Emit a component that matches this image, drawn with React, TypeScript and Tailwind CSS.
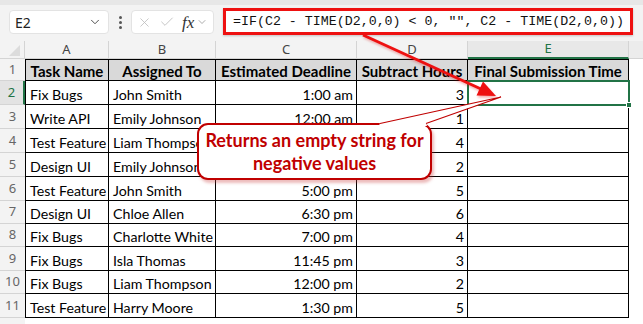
import { ChevronDown, X, Check } from "lucide-react";

interface Task {
  name: string;
  assignee: string;
  deadline: string;
  hours: number;
}

// deadlines of rows 4 and 5 sit under the callout in the picture
const tasks: Task[] = [
  { name: "Fix Bugs", assignee: "John Smith", deadline: "1:00 am", hours: 3 },
  { name: "Write API", assignee: "Emily Johnson", deadline: "12:00 am", hours: 1 },
  { name: "Test Feature", assignee: "Liam Thompson", deadline: "", hours: 4 },
  { name: "Design UI", assignee: "Emily Johnson", deadline: "", hours: 2 },
  { name: "Test Feature", assignee: "John Smith", deadline: "5:00 pm", hours: 5 },
  { name: "Design UI", assignee: "Chloe Allen", deadline: "6:30 pm", hours: 6 },
  { name: "Fix Bugs", assignee: "Charlotte White", deadline: "7:00 pm", hours: 4 },
  { name: "Fix Bugs", assignee: "Isla Thomas", deadline: "11:45 pm", hours: 3 },
  { name: "Fix Bugs", assignee: "Liam Thompson", deadline: "12:00 pm", hours: 2 },
  { name: "Test Feature", assignee: "Harry Moore", deadline: "1:30 pm", hours: 5 },
];

// rows 2..11 are not all the same height in the sheet
const rowHeights = ["h-[24px]", "h-[24px]", "h-[24px]", "h-[24px]", "h-[24px]", "h-[23px]", "h-[23px]", "h-[24px]", "h-[23px]", "h-[24px]"];

const cell = "border-r border-b border-black overflow-hidden whitespace-nowrap flex items-end leading-[19px]";

const FormulaBar = () => (
  <div className="h-[41px] bg-[#f3f3f3] relative">
    <div className="h-[5px] bg-[#e7e7e7]" />
    <div className="flex items-center pl-[9px] pt-[4px]">
      <div className="w-[100px] h-[24px] bg-white rounded-[4px] border border-[#e3e3e3] flex items-center justify-between pl-[5px] pr-[6px]">
        <span className="text-[14px] text-[#222] font-['Noto_Sans',sans-serif]">E2</span>
        <ChevronDown size={14} strokeWidth={1.6} className="text-[#444]" />
      </div>
      <div className="w-[22px] flex flex-col items-center gap-[2px]">
        <span className="w-[3px] h-[3px] rounded-full bg-[#555]" />
        <span className="w-[3px] h-[3px] rounded-full bg-[#555]" />
        <span className="w-[3px] h-[3px] rounded-full bg-[#555]" />
      </div>
      <div className="w-[83px] h-[24px] bg-white rounded-[4px] border border-[#e3e3e3] flex items-center pl-[5px]">
        <X size={15} strokeWidth={1.3} className="text-[#bdbdbd]" />
        <Check size={16} strokeWidth={1.3} className="text-[#bdbdbd] ml-[7px]" />
        <span className="ml-[7px] text-[17px] italic text-[#333] font-['Liberation_Serif',serif] leading-none">fx</span>
        <ChevronDown size={12} strokeWidth={1.4} className="text-[#888] ml-[2px]" />
      </div>
      <div className="ml-[9px] w-[410px] h-[27px] -mt-[1px] bg-white border-[3px] border-[#ee1111] flex items-center pl-[7px] shadow-[0_1px_2px_rgba(0,0,0,0.2)]">
        <span className="text-[13.3px] text-[#111] font-['Liberation_Mono',monospace] whitespace-pre">
          =IF(C2 - TIME(D2,0,0) &lt; 0, "", C2 - TIME(D2,0,0))
        </span>
      </div>
    </div>
  </div>
);

const ColumnHeaders = () => {
  const cols = [
    { l: "A", w: "w-[84px]" },
    { l: "B", w: "w-[107px]" },
    { l: "C", w: "w-[141px]" },
    { l: "D", w: "w-[111px]" },
  ];
  return (
    <div className="flex h-[18px] bg-[#f3f3f3] text-[13px] text-[#444] font-['Noto_Sans',sans-serif]">
      <div className="w-[25px] border-r border-b border-[#d4d4d4] relative">
        <svg width="25" height="18" className="absolute inset-0">
          <polygon points="20,4 20,15 9,15" fill="#dcdcdc" />
        </svg>
      </div>
      {cols.map((c) => (
        <div key={c.l} className={`${c.w} border-r border-b border-[#d4d4d4] flex items-center justify-center`}>
          {c.l}
        </div>
      ))}
      <div className="w-[161px] border-r border-[#d4d4d4] border-b-2 border-b-[#217346] bg-[#e8e8e8] flex items-center justify-center text-[#217346]">
        E
      </div>
      <div className="flex-1 bg-[#ececec] border-b border-[#d4d4d4]" />
    </div>
  );
};

const Sheet = () => (
  <div className="font-['Lato',sans-serif] text-[14.2px] text-black">
    <ColumnHeaders />
    <div className="flex h-[22px]">
      <div className="w-[25px] bg-[#f3f3f3] border-b border-[#d4d4d4] flex items-center justify-center text-[13px] text-[#666] font-['Noto_Sans',sans-serif]">
        1
      </div>
      {[
        ["Task Name", "w-[84px] border-l"],
        ["Assigned To", "w-[107px]"],
        ["Estimated Deadline", "w-[141px]"],
        ["Subtract Hours", "w-[111px]"],
        ["Final Submission Time", "w-[161px]"],
      ].map(([t, w]) => (
        <div key={t} className={`${w} border-t border-r border-b border-black bg-[#d9d9d9] font-bold text-[15px] flex items-start justify-center leading-[23px] overflow-hidden whitespace-nowrap`}>
          {t}
        </div>
      ))}
    </div>
    {tasks.map((t, i) => (
      <div key={i} className={`flex ${rowHeights[i]}`}>
        <div
          className={`w-[25px] border-b border-[#d4d4d4] flex items-center justify-center text-[13px] font-['Noto_Sans',sans-serif] ${
            i === 0 ? "bg-[#e3e3e3] text-[#217346] border-r-2 border-r-[#217346]" : "bg-[#f3f3f3] text-[#666]"
          }`}
        >
          {i + 2}
        </div>
        <div className={`${cell} w-[84px] border-l pl-[4px]`}>{t.name}</div>
        <div className={`${cell} w-[107px] pl-[4px]`}>{t.assignee}</div>
        <div className={`${cell} w-[141px] justify-end pr-[3px]`}>{t.deadline}</div>
        <div className={`${cell} w-[111px] justify-end pr-[3px]`}>{t.hours}</div>
        <div className={`${cell} w-[161px]`} />
      </div>
    ))}
    <div className="flex h-[8px]">
      <div className="w-[25px] bg-[#f3f3f3]" />
    </div>
  </div>
);

export default function App() {
  return (
    <div className="w-[643px] h-[324px] bg-white relative overflow-hidden">
      <FormulaBar />
      <Sheet />

      {/* selected cell E2 */}
      <div className="absolute left-[467px] top-[80px] w-[163px] h-[26px] border-2 border-[#217346]">
        <div className="absolute -right-[4px] -bottom-[4px] w-[6px] h-[6px] bg-[#217346] border border-white" />
      </div>

      {/* callout */}
      <div className="absolute left-[197px] top-[123px] w-[235px] h-[57px] rounded-[11px] border-2 border-[#c00000] bg-white shadow-[2px_3px_3px_rgba(200,60,60,0.35)] flex flex-col items-center justify-center font-['Lato',sans-serif] font-bold text-[18px] leading-[23px] text-[#c00000]">
        <span>Returns an empty string for</span>
        <span>negative values</span>
      </div>

      <svg width="643" height="324" className="absolute inset-0 pointer-events-none">
        <polygon points="379,126 380,123 501,97 426,123 427,126" fill="white" />
        <polyline points="380,123.5 501,97 426,123.5" fill="none" stroke="#c00000" strokeWidth="1.2" />
        <g className="drop-shadow-[1px_2px_1px_rgba(220,0,0,0.3)]">
          <line x1="363" y1="35" x2="481" y2="89" stroke="#ee1111" strokeWidth="3" />
          <polygon points="496,96 476.5,95.5 483,81.5" fill="#ee1111" />
        </g>
      </svg>
    </div>
  );
}
